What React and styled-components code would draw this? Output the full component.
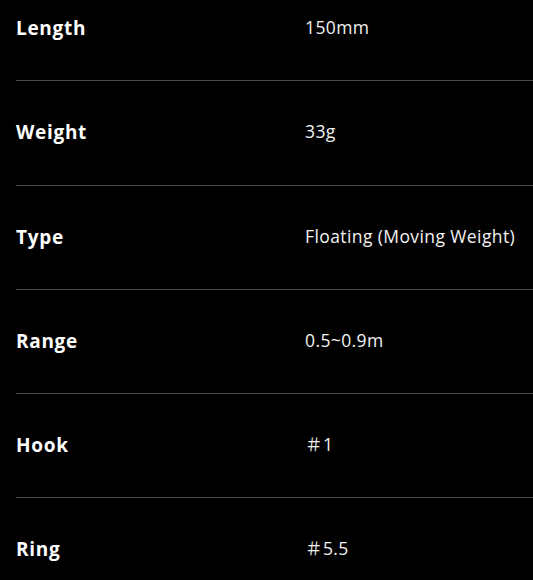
import React from "react";
import styled, { createGlobalStyle } from "styled-components";

const Global = createGlobalStyle`
  html, body { margin: 0; padding: 0; background: #000; }
  body { font-family: "Open Sans", "Noto Sans", "Noto Sans CJK JP", sans-serif; overflow: hidden; }
`;

const Spec = styled.dl`
  margin: -23px 0 0 0;
  padding: 0 0 0 16px;
`;

const Row = styled.div`
  display: grid;
  grid-template-columns: 289px 1fr;
  align-items: start;
  height: 103.25px;
  border-bottom: 1px solid #4a4a4a;
`;

const Label = styled.dt`
  margin: 0;
  padding-top: 39px;
  font-size: 19px;
  line-height: 24px;
  font-weight: 700;
  letter-spacing: 0.7px;
  color: #fff;
`;

const Value = styled.dd`
  margin: 0;
  padding-top: 39px;
  font-size: 17.5px;
  line-height: 22px;
  font-weight: 400;
  letter-spacing: 0.4px;
  color: #f2f2f2;
`;

const specs = [
  ["Length", "150mm"],
  ["Weight", "33g"],
  ["Type", "Floating (Moving Weight)"],
  ["Range", "0.5~0.9m"],
  ["Hook", "＃1"],
  ["Ring", "＃5.5"],
];

export default function App() {
  return (
    <>
      <Global />
      <Spec>
        {specs.map(([k, v]) => (
          <Row key={k}>
            <Label>{k}</Label>
            <Value>{v}</Value>
          </Row>
        ))}
      </Spec>
    </>
  );
}
